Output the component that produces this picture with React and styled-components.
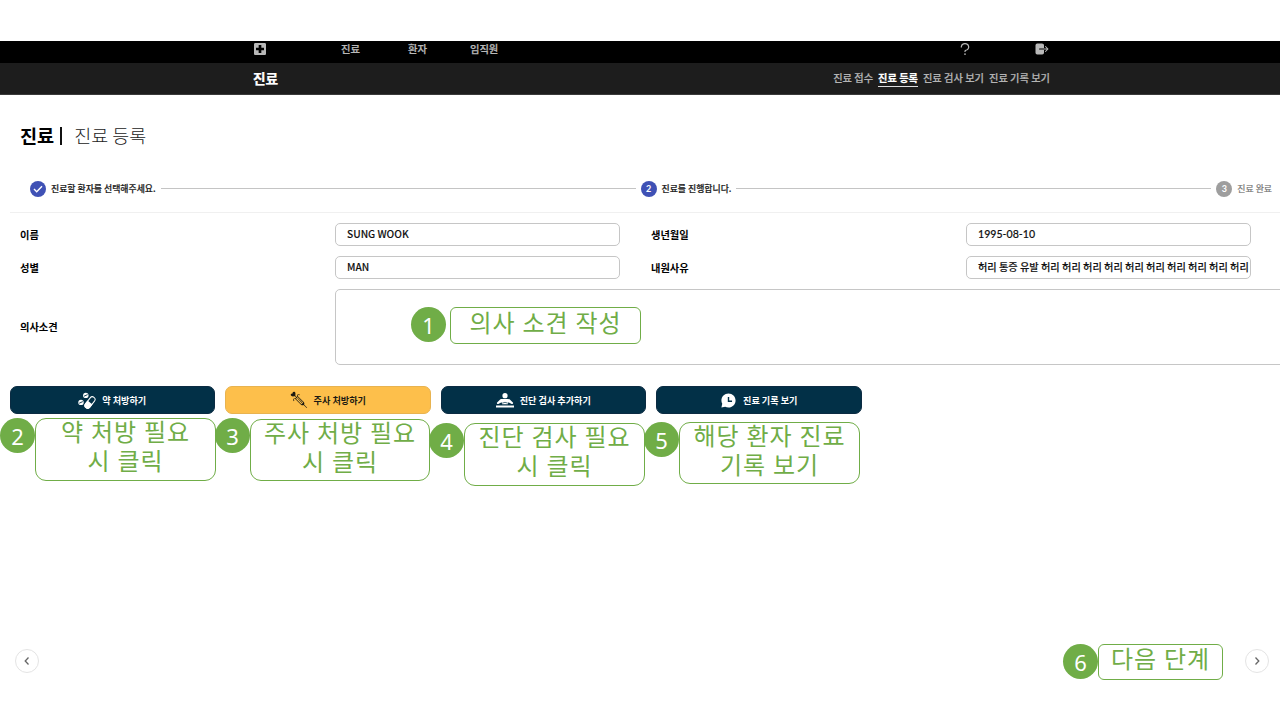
import React from "react";
import styled, { createGlobalStyle } from "styled-components";
import { GiLoveInjection } from "react-icons/gi";
import { RiChatHistoryFill } from "react-icons/ri";
import { MdLocalHospital } from "react-icons/md";
import { IoLogOut } from "react-icons/io5";
import { AiOutlineQuestion } from "react-icons/ai";

const Global = createGlobalStyle`
  * { box-sizing: border-box; }
  body { margin: 0; background: #fff; color: #000; font-family: "Noto Sans CJK KR", sans-serif; }
`;
const Page = styled.div`
  position: relative; width: 1280px; height: 720px; overflow: hidden;
  padding-top: 41px; display: flex; flex-direction: column;
`;
const TopNav = styled.nav`
  height: 21.5px; flex: none; background: #000; color: #b9b9b9;
  padding: 0 230px 5px 252px; display: flex; align-items: center;
  font-size: 10.3px; font-weight: 500; line-height: 16px;
  -webkit-text-stroke: 0.25px currentColor;
  svg { display: block; flex: none; }
`;
const NavItem = styled.span`margin-left: ${(p) => p.$gap}px; white-space: nowrap;`;
const NavTools = styled.div`margin-left: auto; display: flex; align-items: center; gap: 61px;`;
const SubNav = styled.div`
  height: 32.5px; flex: none; background: #1d1d1d; border-bottom: 1px solid #3a3a3a;
  padding: 0 230px 0 253px; display: flex; align-items: center; justify-content: space-between;
`;
const SubTitle = styled.strong`color: #fff; font-size: 13.7px; font-weight: 700; line-height: 20px; -webkit-text-stroke: 0.25px #fff;`;
const SubMenu = styled.div`display: flex; gap: 5px;`;
const SubLink = styled.a`
  font-size: 10.22px; line-height: 17px; white-space: nowrap;
  font-weight: ${(p) => (p.$active ? 700 : 500)};
  color: ${(p) => (p.$active ? "#fff" : "#b4b4b4")};
  -webkit-text-stroke: 0.2px currentColor;
  border-bottom: 1px solid ${(p) => (p.$active ? "#ddd" : "transparent")};
`;
const Heading = styled.h1`
  margin: 25px 0 0 20px; height: 30px; flex: none; display: flex; align-items: center;
  font-size: 18.6px; font-weight: 700; line-height: 30px; white-space: nowrap;
`;
const Bar = styled.i`width: 2px; height: 18px; background: #111; margin: 1px 12px 0 6px;`;
const Light = styled.span`font-weight: 300; font-size: 18.5px; color: #222;`;
const Stepper = styled.div`
  margin: 22px 0 0 10px; height: 33px; flex: none; padding: 0 8px 0 20px;
  display: flex; align-items: center; gap: 5px;
`;
const StepDot = styled.span`
  width: 16px; height: 16px; flex: none; border-radius: 50%; color: #fff;
  background: ${(p) => (p.$muted ? "#9e9e9e" : "#3f51b5")};
  display: flex; align-items: center; justify-content: center;
  font: 700 9px/16px Lato, sans-serif;
`;
const StepText = styled.span`
  font-size: 8.9px; line-height: 16px; white-space: nowrap;
  -webkit-text-stroke: 0.2px currentColor;
  font-weight: ${(p) => (p.$muted ? 400 : 500)}; color: ${(p) => (p.$muted ? "#757575" : "#212121")};
`;
const StepLine = styled.span`flex: 1; height: 1px; background: #c4c4c4;`;
const Divider = styled.hr`margin: 7px 0 0 10px; border: 0; height: 1px; flex: none; background: #f0f0f0; width: 1270px;`;
const Form = styled.div`
  margin: 10px 0 0 20px; display: grid; grid-template-columns: 315px 316px 315px 285px;
  grid-template-rows: 23px 23px 76px; row-gap: 10px; align-items: center;
`;
const Label = styled.label`font-size: 10.25px; font-weight: 700; line-height: 16px;`;
const Field = styled.div`
  width: 285px; height: 23px; border: 1px solid #c6c6c6; border-radius: 5px;
  padding-left: 11px; overflow: hidden; white-space: nowrap;
  font: 500 10.2px/20px ${(p) => (p.$latin ? "Lato, " : "")}"Noto Sans CJK KR", sans-serif;
  color: #111; font-size: ${(p) => (p.$latin ? 10.6 : 10.18)}px;
  -webkit-text-stroke: ${(p) => (p.$latin ? 0.15 : 0.1)}px currentColor;
`;
const Opinion = styled.div`
  grid-column: 2 / -1; width: 960px; height: 76px; border: 1px solid #c6c6c6; border-radius: 5px;
`;
const Actions = styled.div`margin: 21px 0 0 9.5px; display: flex; gap: 10px;`;
const Action = styled.button`
  width: 205.5px; height: 28px; border-radius: 7px; padding: 0;
  border: 1px solid ${(p) => (p.$warm ? "#e8b350" : "#0b2b42")};
  background: ${(p) => (p.$warm ? "#fdbf4b" : "#023047")};
  color: ${(p) => (p.$warm ? "#1c1a12" : "#fff")};
  display: flex; align-items: center; justify-content: center; gap: 6px;
  font: 700 9.1px/16px "Noto Sans CJK KR", sans-serif; white-space: nowrap;
  svg { display: block; flex: none; }
`;
const Pager = styled.div`
  margin-top: auto; padding: 0 11px 47px 15px; display: flex; justify-content: space-between;
`;
const Round = styled.button`
  width: 24px; height: 24px; border-radius: 50%; border: 1px solid #e4e4e4; background: #fff;
  padding: 0; display: flex; align-items: center; justify-content: center;
`;
const Callout = styled.div`
  position: absolute; left: ${(p) => p.$x}px; top: ${(p) => p.$y}px;
  display: flex; align-items: flex-start; gap: ${(p) => p.$gap || 0}px;
`;
const Num = styled.span`
  width: 35px; height: 35px; border-radius: 50%; background: #70ad47; color: #fff; flex: none;
  text-align: center; font: 400 22px/37px "Noto Sans", sans-serif;
`;
const Note = styled.div`
  width: ${(p) => p.$w}px; height: ${(p) => p.$h}px; margin-top: ${(p) => p.$drop || 0}px;
  border: 1px solid #70ad47; border-radius: ${(p) => (p.$h > 40 ? 11 : 6)}px; background: #fff;
  color: #70ad47; text-align: center;
  font-size: 24px; font-weight: 400; line-height: 29px; letter-spacing: 0.9px; word-spacing: 0.7px;
`;
const NoteText = styled.span`
  display: block; white-space: pre; margin-top: ${(p) => p.$lift}px;
`;

const PillsIcon = () => (
  <svg width="18" height="17" viewBox="0 0 18 17" fill="currentColor">
    <circle cx="3" cy="10.400" r="2.700" />
    <circle cx="7.800" cy="3.400" r="2.700" />
    <path d="M1.200 11.200l3.600-1.600M6 4.200l3.600-1.600" stroke="#023047" strokeWidth=".9" />
    <g transform="rotate(38 12 10.500)">
      <rect x="9.300" y="4" width="5.400" height="13" rx="2.700" fill="none" stroke="currentColor" strokeWidth="1" />
      <path d="M8.800 10.500h6.400v3.800a3.200 3.200 0 0 1-6.400 0z" />
    </g>
  </svg>
);
const ExamIcon = () => (
  <svg width="18" height="15" viewBox="0 0 18 15" fill="currentColor">
    <circle cx="9" cy="2.700" r="2.600" />
    <path d="M6 6h6c1.300 0 2 .500 2.600 1.300l2.300 2.100c.700.900-.200 2-1.300 1.500l-3.200-1.600-.600 1.900H6.200l-.600-1.900-3.200 1.600c-1.100.500-2-.600-1.300-1.500l2.300-2.100C4 6.500 4.700 6 6 6z" />
    <path d="M6.200 10.200l2.800-.9 2.800.9" stroke="#023047" strokeWidth=".7" fill="none" />
    <rect x="0" y="12.500" width="18" height="2" />
  </svg>
);
const Chevron = ({ d }) => (
  <svg width="8" height="10" viewBox="0 0 8 10" fill="none" stroke="#666" strokeWidth="1.3"><path d={d} /></svg>
);

const notes = [
  { n: 1, x: 411, y: 307, gap: 4, w: 191, h: 37, lift: -1, text: "의사 소견 작성" },
  { n: 2, x: 0, y: 418, w: 181, h: 63, lift: -3, text: "약 처방 필요\n시 클릭" },
  { n: 3, x: 215, y: 418, drop: 1, w: 180, h: 62, lift: -3, text: "주사 처방 필요\n시 클릭" },
  { n: 4, x: 429, y: 423, w: 181, h: 63, lift: -3, text: "진단 검사 필요\n시 클릭" },
  { n: 5, x: 644, y: 422, w: 181, h: 62, lift: -3, text: "해당 환자 진료\n기록 보기" },
  { n: 6, x: 1063, y: 644, w: 125, h: 36, lift: -2, text: "다음 단계" },
];

export default function App() {
  return (
    <Page>
      <Global />
      <TopNav>
        <MdLocalHospital size={16} />
        <NavItem $gap={73}>진료</NavItem>
        <NavItem $gap={48}>환자</NavItem>
        <NavItem $gap={43}>임직원</NavItem>
        <NavTools><AiOutlineQuestion size={16} /><IoLogOut size={16} /></NavTools>
      </TopNav>
      <SubNav>
        <SubTitle>진료</SubTitle>
        <SubMenu>
          <SubLink>진료 접수</SubLink>
          <SubLink $active>진료 등록</SubLink>
          <SubLink>진료 검사 보기</SubLink>
          <SubLink>진료 기록 보기</SubLink>
        </SubMenu>
      </SubNav>
      <Heading>진료<Bar /><Light>진료 등록</Light></Heading>
      <Stepper>
        <StepDot><svg width="10" height="8" viewBox="0 0 10 8" fill="none" stroke="#fff" strokeWidth="1.4"><path d="M1 4l2.700 2.700L9 1.200" /></svg></StepDot>
        <StepText>진료할 환자를 선택해주세요.</StepText>
        <StepLine />
        <StepDot>2</StepDot>
        <StepText>진료를 진행합니다.</StepText>
        <StepLine />
        <StepDot $muted>3</StepDot>
        <StepText $muted>진료 완료</StepText>
      </Stepper>
      <Divider />
      <Form>
        <Label>이름</Label><Field>SUNG WOOK</Field>
        <Label>생년월일</Label><Field $latin>1995-08-10</Field>
        <Label>성별</Label><Field>MAN</Field>
        <Label>내원사유</Label><Field>허리 통증 유발 허리 허리 허리 허리 허리 허리 허리 허리 허리 허리</Field>
        <Label>의사소견</Label><Opinion />
      </Form>
      <Actions>
        <Action><PillsIcon />약 처방하기</Action>
        <Action $warm><GiLoveInjection size={18} />주사 처방하기</Action>
        <Action><ExamIcon />진단 검사 추가하기</Action>
        <Action><RiChatHistoryFill size={17} />진료 기록 보기</Action>
      </Actions>
      <Pager>
        <Round><Chevron d="M5.500 1.500L2.200 5l3.300 3.500" /></Round>
        <Round><Chevron d="M2.500 1.500L5.800 5L2.500 8.500" /></Round>
      </Pager>
      {notes.map((c) => (
        <Callout key={c.n} $x={c.x} $y={c.y} $gap={c.gap}>
          <Num>{c.n}</Num>
          <Note $w={c.w} $h={c.h} $drop={c.drop}><NoteText $lift={c.lift}>{c.text}</NoteText></Note>
        </Callout>
      ))}
    </Page>
  );
}
